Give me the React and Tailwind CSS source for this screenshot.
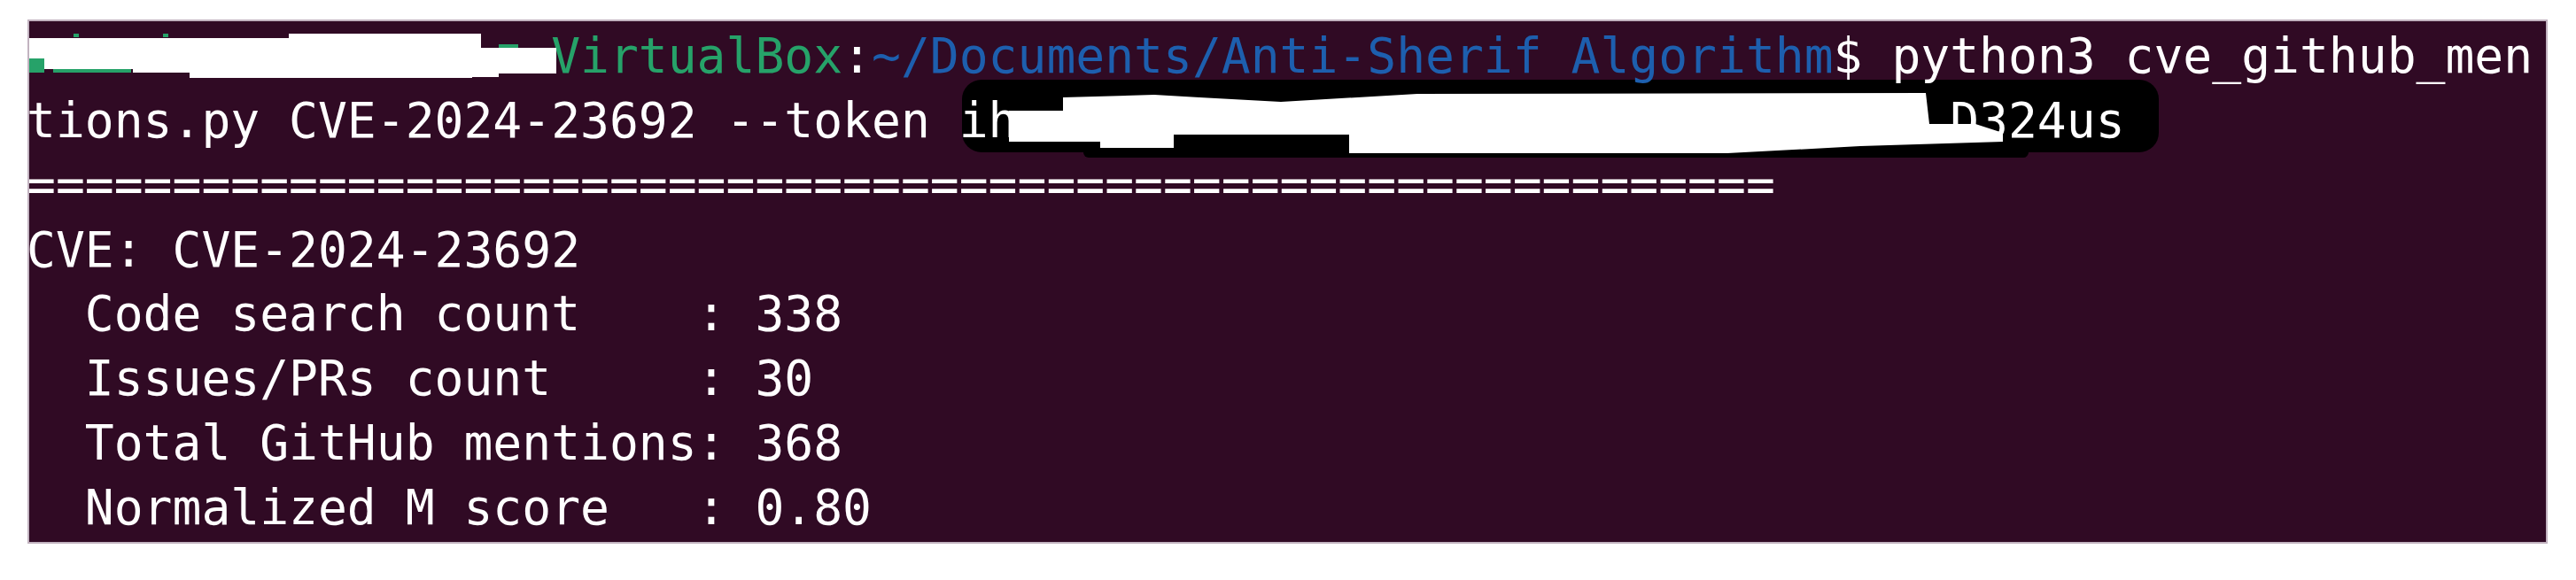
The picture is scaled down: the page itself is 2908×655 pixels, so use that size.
import React from "react";

const FG = "text-white";
const GREEN = "text-[#26a269]";
const BLUE = "text-[#1d5fae]";

const rows = [
  [
    { t: " ".repeat(17) + "-VirtualBox", c: GREEN },
    { t: ":", c: FG },
    { t: "~/Documents/Anti-Sherif Algorithm", c: BLUE },
    { t: "$ python3 cve_github_men", c: FG },
  ],
  [{ t: "tions.py CVE-2024-23692 --token ih" + " ".repeat(32) + "D324us", c: FG }],
  [{ t: "=".repeat(60), c: FG }],
  [{ t: "CVE: CVE-2024-23692", c: FG }],
  [{ t: "  Code search count    : 338", c: FG }],
  [{ t: "  Issues/PRs count     : 30", c: FG }],
  [{ t: "  Total GitHub mentions: 368", c: FG }],
  [{ t: "  Normalized M score   : 0.80", c: FG }],
];

function App() {
  return (
    <div className="w-[2908px] h-[655px] bg-white pt-[22px] pl-[31px]">
      <div className="relative w-[2845px] h-[592px] bg-[#300a24] border-2 border-[#c2b3c0] overflow-hidden">
        {/* black marker behind the token */}
        <svg
          className="absolute left-0 top-0 w-[2841px] h-[588px]"
          viewBox="33 24 2841 588"
        >
          <rect x="1086" y="90" width="1351" height="82" rx="22" fill="#000" />
          <rect x="1223" y="150" width="1067" height="28" rx="6" fill="#000" />
        </svg>

        <div className="relative -ml-[3px] pt-[3px] font-['DejaVu_Sans_Mono',monospace] text-[54.65px]">
          {rows.map((row, i) => (
            <div key={i} className="h-[72.86px] leading-[72.86px] whitespace-pre">
              {row.map((s, j) => (
                <span key={j} className={s.c}>
                  {s.t}
                </span>
              ))}
            </div>
          ))}
        </div>

        {/* white redaction strokes */}
        <svg
          className="absolute left-0 top-0 w-[2841px] h-[588px]"
          viewBox="33 24 2841 588"
        >
          <rect x="33" y="66" width="17" height="16" fill="#26a269" />
          <rect x="60" y="78" width="88" height="4" fill="#26a269" />
          <rect x="83" y="38" width="6" height="4" fill="#26a269" />
          <rect x="184" y="38" width="6" height="4" fill="#26a269" />
          <rect x="563" y="50" width="22" height="4" fill="#26a269" />
          <polygon
            fill="#fff"
            points="33,43 326,43 326,38 543,38 543,54 628,54 628,83 563,83 563,87 533,87 533,88 214,88 214,82 150,82 150,78 50,78 50,66 33,66"
          />
          <polygon
            fill="#fff"
            points="1139,125 1200,125 1200,110 1303,107 1354,110 1446,115 1600,106 2174,105 2178,140 2230,140 2261,150 2261,160 2100,165 1950,173 1523,173 1523,152 1325,152 1325,167 1242,167 1242,160 1139,160"
          />
        </svg>
      </div>
    </div>
  );
}

export default App;
